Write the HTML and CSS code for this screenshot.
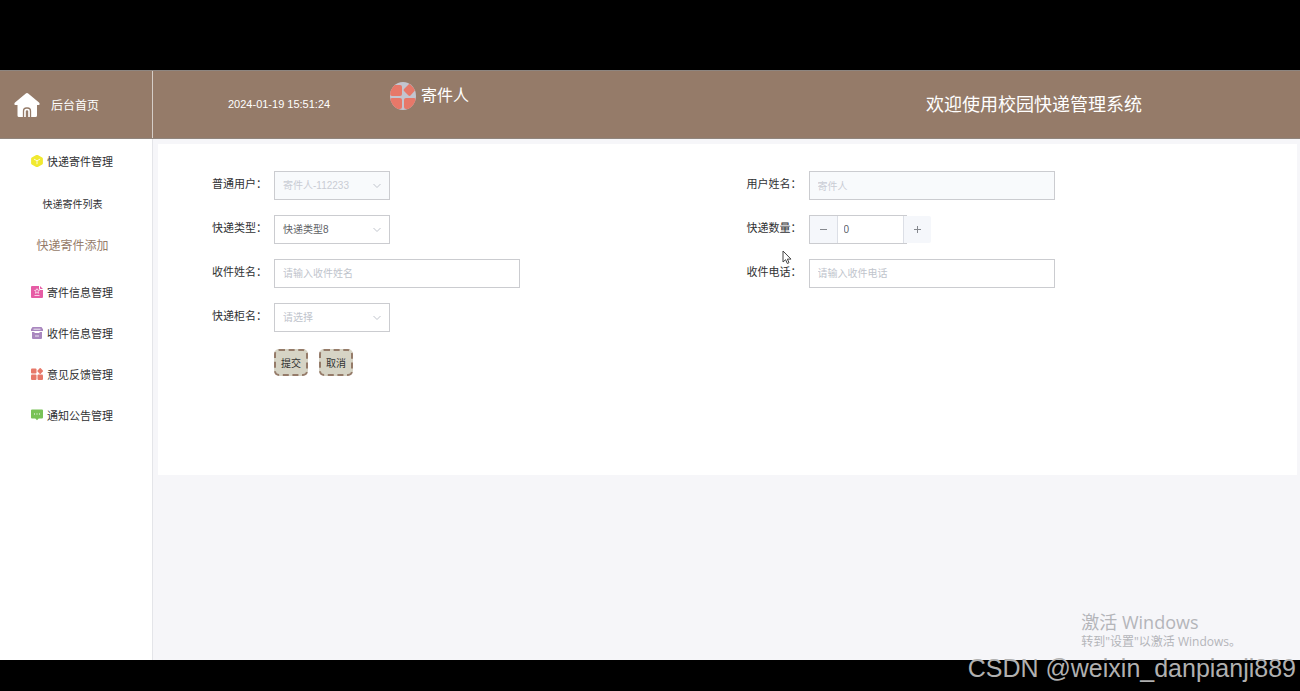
FILE: index.html
```html
<!DOCTYPE html>
<html lang="zh-CN">
<head>
<meta charset="utf-8">
<title>校园快递管理系统</title>
<link rel="stylesheet" href="styles.css">
</head>
<body>
<div class="screen">
  <header class="topbar">
    <a class="brand" href="#">
      <svg class="brand-icon" viewBox="0 0 26 26"><path fill="#fff" d="M11.500 1.800a2.200 2.200 0 0 1 3 0L25 10.600c1.200 1.300.6 2.400-.8 2.400H23v10.500a1.500 1.500 0 0 1-1.500 1.500H5a1.500 1.500 0 0 1-1.500-1.500V13H1.800C.4 13-.2 11.900 1 10.600z"/><path fill="none" stroke="#957b69" stroke-width="1.300" d="M9.500 25.500V19a3 3 0 0 1 3-3h1a3 3 0 0 1 3 3v6.500"/><path fill="#957b69" d="M11.800 25.500V19.500a1.200 1.200 0 0 1 2.400 0v6z"/></svg>
      <span>后台首页</span>
    </a>
    <time class="clock">2024-01-19 15:51:24</time>
    <div class="user">
      <svg class="avatar" viewBox="0 0 26 28"><defs><clipPath id="oval"><ellipse cx="13" cy="14" rx="13" ry="14"/></clipPath></defs><g clip-path="url(#oval)"><path fill="#c3c5cf" d="M0 0h26v28H0z"/><g fill="#e77869"><rect x="0" y="3" width="12" height="11" rx="2"/><rect x="0" y="16" width="12" height="11" rx="2"/><rect x="14" y="16" width="12" height="11" rx="2"/><path d="M18.500 2.500a1.500 1.500 0 0 1 2 0l4 4.500a1.500 1.500 0 0 1 0 2l-4 4.500a1.500 1.500 0 0 1-2 0L14 9a1.500 1.500 0 0 1 0-2z"/></g></g></svg>
      <span>寄件人</span>
    </div>
    <h1 class="title">欢迎使用校园快递管理系统</h1>
  </header>
  <div class="main">
    <nav class="sidebar">
      <a class="item" href="#"><svg class="icon" viewBox="0 0 12 12"><path fill="#f1e92f" d="M5.200.1a1.600 1.600 0 0 1 1.600 0l4.400 2.400a1.400 1.400 0 0 1 .7 1.200v4.600a1.400 1.400 0 0 1-.7 1.200l-4.400 2.400a1.600 1.600 0 0 1-1.600 0L.8 9.500a1.400 1.400 0 0 1-.7-1.200V3.700a1.400 1.400 0 0 1 .7-1.200z"/><path fill="none" stroke="#fff" stroke-width=".8" stroke-linecap="round" d="M3.300 4.300L6 5.800l2.700-1.500M6 5.800v3"/></svg>快递寄件管理</a>
      <div class="submenu">
        <a class="item sub" href="#">快递寄件列表</a>
        <a class="item sub active" href="#">快递寄件添加</a>
      </div>
      <a class="item" href="#"><svg class="icon" viewBox="0 0 12 12"><path fill="#e65ca5" d="M1 0h7v2.500a1.500 1.500 0 0 0 1.500 1.500H12v7a1 1 0 0 1-1 1H1a1 1 0 0 1-1-1V1a1 1 0 0 1 1-1zM9 0l3 3H9.700A.7.7 0 0 1 9 2.300z"/><path fill="none" stroke="#fff" stroke-width=".7" d="M6 2.700l.8 1.500 1.600.2-1.200 1.200.3 1.700L6 6.500l-1.500.8.3-1.700-1.200-1.200 1.600-.2zM3.500 9.500h5"/></svg>寄件信息管理</a>
      <a class="item" href="#"><svg class="icon" viewBox="0 0 12 12"><path fill="#a987bf" d="M1.500 0h9L12 2.200V4H0V2.200zM1 5h2.500v1h5V5H11v6a1 1 0 0 1-1 1H2a1 1 0 0 1-1-1z"/><path stroke="#fff" stroke-width=".8" d="M2.500 2.200h7M4 9h4"/></svg>收件信息管理</a>
      <a class="item" href="#"><svg class="icon" viewBox="0 0 12 12"><g fill="#e77869"><rect y=".5" width="5.500" height="5" rx="1"/><rect y="6.500" width="5.500" height="5.500" rx="1"/><rect x="6.500" y="6.500" width="5.500" height="5.500" rx="1"/><path d="M8.600.3a.9.900 0 0 1 1.200 0l2 2.100a.9.900 0 0 1 0 1.200l-2 2.100a.9.900 0 0 1-1.200 0l-2-2.100a.9.900 0 0 1 0-1.200z"/></g></svg>意见反馈管理</a>
      <a class="item" href="#"><svg class="icon" viewBox="0 0 12 12"><path fill="#79c257" d="M1 .5h10a1 1 0 0 1 1 1v7a1 1 0 0 1-1 1H7.700L6 11.300 4.300 9.500H1a1 1 0 0 1-1-1v-7a1 1 0 0 1 1-1z"/><path fill="#fff" d="M3 4.500h1v1H3zM5.500 4.500h1v1h-1zM8 4.500h1v1H8z"/></svg>通知公告管理</a>
    </nav>
    <main class="content">
      <form class="panel">
        <div class="field">
          <label for="account">普通用户：</label>
          <div class="select"><select id="account" disabled><option>寄件人-112233</option></select><svg viewBox="0 0 8 8"><path d="M.5 2L4 5.500 7.500 2"/></svg></div>
        </div>
        <div class="field">
          <label for="name">用户姓名：</label>
          <input class="text" id="name" value="寄件人" disabled>
        </div>
        <div class="field">
          <label for="type">快递类型：</label>
          <div class="select"><select id="type"><option>快递类型8</option></select><svg viewBox="0 0 8 8"><path d="M.5 2L4 5.500 7.500 2"/></svg></div>
        </div>
        <div class="field">
          <label for="count">快递数量：</label>
          <div class="number">
            <input id="count" value="0" inputmode="numeric">
            <button class="step minus" type="button" aria-label="减少"><svg viewBox="0 0 9 9"><path d="M1 4.500h7"/></svg></button>
            <button class="step plus" type="button" aria-label="增加"><svg viewBox="0 0 9 9"><path d="M1 4.500h7M4.500 1v7"/></svg></button>
          </div>
        </div>
        <div class="field">
          <label for="receiver">收件姓名：</label>
          <input class="text" id="receiver" placeholder="请输入收件姓名">
        </div>
        <div class="field">
          <label for="phone">收件电话：</label>
          <input class="text" id="phone" placeholder="请输入收件电话">
        </div>
        <div class="field">
          <label for="locker">快递柜名：</label>
          <div class="select empty"><select id="locker"><option>请选择</option></select><svg viewBox="0 0 8 8"><path d="M.5 2L4 5.500 7.500 2"/></svg></div>
        </div>
        <div class="actions">
          <button type="submit">提交</button>
          <button type="button">取消</button>
        </div>
      </form>
    </main>
  </div>
  <div class="activation"><p class="activation-title">激活 Windows</p><p>转到"设置"以激活 Windows。</p></div>
  <div class="credit">CSDN @weixin_danpianji889</div>
  <svg class="cursor" viewBox="0 0 10 15"><path fill="#fff" stroke="#444" d="M1 1v11l2.600-2.300L5.300 13.500l1.700-.8-1.600-3.600H9z"/></svg>
</div>
</body>
</html>
```
FILE: styles.css
```css
* { box-sizing: border-box; }

body {
  margin: 0;
  background: #000;
  font-family: "Liberation Sans", "Noto Sans CJK SC", sans-serif;
  font-size: 11px;
  color: #303133;
}

a { color: inherit; text-decoration: none; }
p, h1 { margin: 0; font-weight: normal; }
input, select, button { font: inherit; margin: 0; }

.screen {
  position: relative;
  display: flex;
  flex-direction: column;
  height: 100vh;
  padding: 70px 0 31px;
  overflow: hidden;
}

.topbar {
  display: flex;
  flex: none;
  align-items: stretch;
  height: 69px;
  background: #957b69;
  border-top: 1px solid #8d8580;
  border-bottom: 1px solid #90857d;
  color: #fff;
}

.brand {
  display: flex;
  align-items: center;
  gap: 11px;
  width: 153px;
  padding-left: 14px;
  border-right: 1px solid #d5cdc7;
  font-size: 12px;
}
.brand-icon { width: 26px; height: 26px; }

.clock { width: 237px; padding-left: 75px; line-height: 66px; }

.user {
  display: flex;
  align-items: center;
  align-self: flex-start;
  gap: 5px;
  padding-top: 11px;
  font-size: 16px;
  line-height: 28px;
}
.avatar { width: 26px; height: 28px; }

.title {
  margin-left: auto;
  margin-right: 158px;
  font-size: 18px;
  line-height: 69px;
}

.main { display: flex; flex: 1; min-height: 0; }

.sidebar {
  flex: none;
  width: 153px;
  padding-top: 1px;
  background: #fff;
  border-right: 1px solid #e4e5e9;
}
.item {
  display: flex;
  align-items: center;
  gap: 4px;
  height: 41px;
  padding-left: 31px;
}
.icon { width: 12px; height: 12px; }
.submenu { padding: 2px 0 6px; }
.sub { justify-content: center; padding: 0 7px 0 0; font-size: 10px; }
.active { color: #957b69; font-size: 12px; }

.content {
  flex: 1;
  padding: 5px 3px 0 5px;
  background: #f6f6f9;
}
.panel {
  display: grid;
  grid-template-columns: 1fr 1fr;
  align-content: start;
  row-gap: 15px;
  min-height: 331px;
  padding: 27px 35px;
  background: #fff;
}

.field { display: flex; height: 29px; }
.field label {
  width: 81px;
  padding-right: 7px;
  line-height: 27px;
  text-align: right;
  white-space: nowrap;
}

.text, .select select, .number input {
  height: 29px;
  padding: 0 8px;
  border: 1px solid #cbccd0;
  border-radius: 0;
  background: #fff;
  color: #606266;
  font-size: 10px;
}
.text { width: 246px; }
.text::placeholder { color: #c0c4cc; opacity: 1; }
.text:disabled, .select select:disabled { background: #f8fafc; color: #c9ccd4; opacity: 1; }

.select { position: relative; width: 116px; }
.select select { width: 100%; appearance: none; }
.empty select { color: #c0c4cc; }
.select svg {
  position: absolute;
  top: 11px;
  right: 9px;
  width: 8px;
  height: 8px;
  fill: none;
  stroke: #c0c4cc;
  pointer-events: none;
}

.number { position: relative; width: 122px; }
.number input { width: 98px; padding: 0 34px; }
.step {
  display: flex;
  align-items: center;
  justify-content: center;
  position: absolute;
  top: 1px;
  width: 28px;
  height: 27px;
  padding: 0;
  border: 0;
  background: #f5f7fb;
}
.step svg { width: 9px; height: 9px; stroke: #85888e; stroke-width: 1; }
.minus { left: 1px; border-right: 1px solid #dcdfe6; }
.plus { right: 0; border-left: 1px solid #dcdfe6; border-radius: 0 2px 2px 0; }

.actions {
  display: flex;
  grid-column: 1;
  gap: 11px;
  padding: 2px 0 0 81px;
}
.actions button {
  width: 34px;
  height: 27px;
  padding: 0;
  border: 2px dashed #957b69;
  border-radius: 5px;
  background: #d6d4c5;
  color: #333;
  font-size: 10px;
}

.activation {
  position: absolute;
  right: 59px;
  bottom: 41px;
  color: #b4b5b9;
  font-family: "Open Sans", "Noto Sans CJK SC", sans-serif;
  font-size: 12px;
  line-height: 17px;
}
.activation-title { font-size: 18px; line-height: 22px; }

.credit {
  position: absolute;
  right: 4px;
  bottom: 8px;
  color: #b0b0b0;
  font-size: 25px;
  line-height: 30px;
}

.cursor { position: absolute; left: 782px; top: 250px; width: 10px; height: 15px; }
```
